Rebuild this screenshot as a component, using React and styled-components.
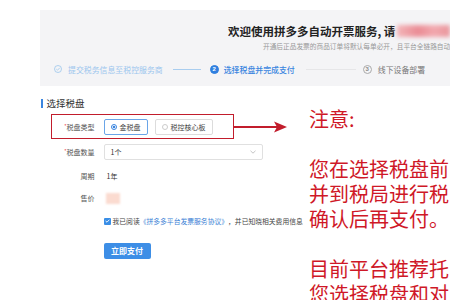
import React from 'react';
import styled, { createGlobalStyle } from 'styled-components';

const GlobalStyle = createGlobalStyle`
  html, body {
    margin: 0;
    padding: 0;
    background: #fff;
  }
  body {
    font-family: 'Noto Sans CJK SC', 'Noto Sans', sans-serif;
    overflow: hidden;
  }
`;

const Page = styled.div`
  width: 450px;
  height: 300px;
  overflow: hidden;
  background: #fff;
`;

const Banner = styled.div`
  margin: 10px 0 0 40px;
  height: 76px;
  background: #f4f4f6;
  overflow: hidden;
  white-space: nowrap;
`;

const Title = styled.div`
  padding: 14px 0 0 188px;
  height: 14px;
  line-height: 14px;
  font-size: 11.5px;
  font-weight: 700;
  color: #222;
  display: flex;
  align-items: center;
`;

const Smudge = styled.span`
  display: inline-block;
  width: 64px;
  height: 12px;
  margin-left: 2px;
  background: linear-gradient(90deg, #f3b4b8, #ea8c95 40%, #f2a8ae 70%, #e9959c);
  filter: blur(2px);
`;

const Subtitle = styled.div`
  margin-top: 3.5px;
  padding-left: 223px;
  font-size: 6.7px;
  line-height: 9px;
  color: #999;
`;

const Steps = styled.div`
  margin-top: 13.5px;
  padding-left: 14px;
  height: 10px;
  display: flex;
  align-items: center;
  font-size: 7.9px;
`;

const StepText = styled.span`
  color: ${({ $state }) =>
    $state === 'done' ? '#9cc6ee' : $state === 'active' ? '#3a85df' : '#777'};
  font-weight: ${({ $state }) => ($state === 'active' ? 500 : 400)};
  margin-left: ${({ $ml }) => $ml}px;
`;

const StepLine = styled.span`
  display: block;
  height: 1px;
  width: ${({ $w }) => $w}px;
  margin-left: ${({ $ml }) => $ml}px;
  background: ${({ $done }) => ($done ? '#a9cdef' : '#e6e6e8')};
`;

const StepNum = styled.span`
  width: 9px;
  height: 9px;
  border-radius: 50%;
  margin-left: ${({ $ml }) => $ml}px;
  box-sizing: border-box;
  display: flex;
  align-items: center;
  justify-content: center;
  font-size: 6px;
  line-height: 1;
  font-family: 'Liberation Sans', sans-serif;
  background: ${({ $active }) => ($active ? '#2f7fdf' : 'transparent')};
  color: ${({ $active }) => ($active ? '#fff' : '#888')};
  border: 1px solid ${({ $active }) => ($active ? '#2f7fdf' : '#aaa')};
  font-weight: 700;
`;

const Body = styled.div`
  display: flex;
`;

const FormColumn = styled.div`
  flex: 0 0 309px;
  padding-top: 11px;
  padding-left: 40px;
  box-sizing: border-box;
`;

const SectionTitle = styled.div`
  display: flex;
  align-items: center;
  height: 12px;
  font-size: 9.5px;
  color: #333;
  padding-left: 1px;

  &::before {
    content: '';
    width: 1.5px;
    height: 9px;
    background: #3a85df;
    margin-right: 4px;
  }
`;

const HighlightWrap = styled.div`
  display: flex;
  align-items: center;
  margin-top: 5px;
`;

const FormRow = styled.div`
  display: flex;
  align-items: center;
  box-sizing: border-box;
  margin-left: 11px;
  height: ${({ $h }) => $h || 19}px;
  margin-top: ${({ $mt }) => $mt || 0}px;
  width: ${({ $w }) => ($w ? `${$w}px` : 'auto')};
  border: 1.5px solid ${({ $highlight }) => ($highlight ? '#c21d2c' : 'transparent')};
`;

const Label = styled.span`
  width: 42.5px;
  text-align: right;
  font-size: 7px;
  color: #555;
  margin-right: 9px;
`;

const Star = styled.span`
  color: #e33;
  font-size: 5px;
  vertical-align: top;
`;

const RadioBox = styled.span`
  display: flex;
  align-items: center;
  height: 16px;
  box-sizing: border-box;
  padding: 0 6px;
  margin-right: 7px;
  border-radius: 2px;
  background: #fff;
  border: 1px solid ${({ $checked }) => ($checked ? '#6aa5e8' : '#dcdcdc')};
  font-size: 7px;
  color: #444;
`;

const RadioDot = styled.span`
  width: 6px;
  height: 6px;
  box-sizing: border-box;
  border-radius: 50%;
  margin-right: 3px;
  border: 1px solid ${({ $checked }) => ($checked ? '#3a85df' : '#ccc')};
  background: ${({ $checked }) =>
    $checked ? 'radial-gradient(circle, #3a85df 0 1.4px, #fff 1.6px)' : '#fff'};
`;

const Select = styled.span`
  display: flex;
  align-items: center;
  justify-content: space-between;
  width: 159px;
  height: 16px;
  box-sizing: border-box;
  padding: 0 6px 0 6px;
  border: 1px solid #e0e0e0;
  border-radius: 2px;
  font-size: 7px;
  color: #333;
`;

const Value = styled.span`
  font-size: 7px;
  color: #333;
  padding-left: 3px;
`;

const Blur = styled.span`
  display: inline-block;
  width: 14px;
  height: 11px;
  margin-left: 2px;
  background: #fbdbd0;
  filter: blur(1px);
`;

const Agree = styled.span`
  display: flex;
  align-items: center;
  font-size: 6.8px;
  color: #444;
  white-space: nowrap;
`;

const Check = styled.span`
  width: 7px;
  height: 7px;
  border-radius: 1px;
  background: #3a8ee6;
  margin-right: 2px;
  display: flex;
  align-items: center;
  justify-content: center;
`;

const Link = styled.span`
  color: #3a7fd5;
`;

const PayButton = styled.button`
  height: 16px;
  padding: 0 7.5px;
  border: none;
  border-radius: 2px;
  background: #3d8ee6;
  color: #fff;
  font-family: inherit;
  font-size: 8px;
  font-weight: 700;
  line-height: 16px;
`;

const Note = styled.div`
  flex: 1;
  padding-top: 19.5px;
  font-size: 20px;
  line-height: 25px;
  color: #cf1827;
  white-space: nowrap;
  overflow: hidden;
`;

const Para = styled.p`
  margin: 0 0 25px;
`;

function CheckCircle() {
  return (
    <svg width="8" height="8" viewBox="0 0 8 8">
      <circle cx="4" cy="4" r="3.5" fill="none" stroke="#9cc6ee" strokeWidth="0.8" />
      <path d="M2.3 4.1 L3.5 5.2 L5.7 2.9" fill="none" stroke="#9cc6ee" strokeWidth="0.8" />
    </svg>
  );
}

function Arrow() {
  return (
    <svg width="53" height="12" viewBox="0 0 53 12">
      <line x1="0" y1="6" x2="44" y2="6" stroke="#c21d2c" strokeWidth="2" />
      <polygon points="40,0.5 53,6 40,11.5 43,6" fill="#c21d2c" />
    </svg>
  );
}

function Chevron() {
  return (
    <svg width="6" height="4" viewBox="0 0 6 4">
      <path d="M0.5 0.8 L3 3.2 L5.5 0.8" fill="none" stroke="#aaa" strokeWidth="0.7" />
    </svg>
  );
}

export default function App() {
  return (
    <Page>
      <GlobalStyle />
      <Banner>
        <Title>
          欢迎使用拼多多自动开票服务, 请<Smudge />
        </Title>
        <Subtitle>开通后正品发票的商品订单将默认每单必开，且平台全链路自动化</Subtitle>
        <Steps>
          <CheckCircle />
          <StepText $state="done" $ml={6}>提交税务信息至税控服务商</StepText>
          <StepLine $done $w={28} $ml={10} />
          <StepNum $active $ml={9}>2</StepNum>
          <StepText $state="active" $ml={5}>选择税盘并完成支付</StepText>
          <StepLine $w={50} $ml={11} />
          <StepNum $ml={7}>3</StepNum>
          <StepText $ml={6}>线下设备部署</StepText>
        </Steps>
      </Banner>
      <Body>
        <FormColumn>
          <SectionTitle>选择税盘</SectionTitle>
          <HighlightWrap>
            <FormRow $highlight $w={183} $h={25}>
              <Label>
                <Star>*</Star>税盘类型
              </Label>
              <RadioBox $checked>
                <RadioDot $checked />
                金税盘
              </RadioBox>
              <RadioBox>
                <RadioDot />
                税控核心板
              </RadioBox>
            </FormRow>
            <Arrow />
          </HighlightWrap>
          <FormRow $mt={3.5}>
            <Label>
              <Star>*</Star>税盘数量
            </Label>
            <Select>
              1个
              <Chevron />
            </Select>
          </FormRow>
          <FormRow $mt={5}>
            <Label>周期</Label>
            <Value>1年</Value>
          </FormRow>
          <FormRow $mt={3}>
            <Label>售价</Label>
            <Blur />
          </FormRow>
          <FormRow $mt={4}>
            <Label />
            <Agree>
              <Check>
                <svg width="5" height="4" viewBox="0 0 5 4">
                  <path d="M0.6 2 L2 3.2 L4.4 0.7" fill="none" stroke="#fff" strokeWidth="0.9" />
                </svg>
              </Check>
              我已阅读<Link>《拼多多平台发票服务协议》</Link>，并已知晓相关费用信息
            </Agree>
          </FormRow>
          <FormRow $mt={11}>
            <Label />
            <PayButton>立即支付</PayButton>
          </FormRow>
        </FormColumn>
        <Note>
          <Para>注意:</Para>
          <Para>
            您在选择税盘前
            <br />
            并到税局进行税
            <br />
            确认后再支付。
          </Para>
          <Para>
            目前平台推荐托
            <br />
            您选择税盘和对
          </Para>
        </Note>
      </Body>
    </Page>
  );
}
